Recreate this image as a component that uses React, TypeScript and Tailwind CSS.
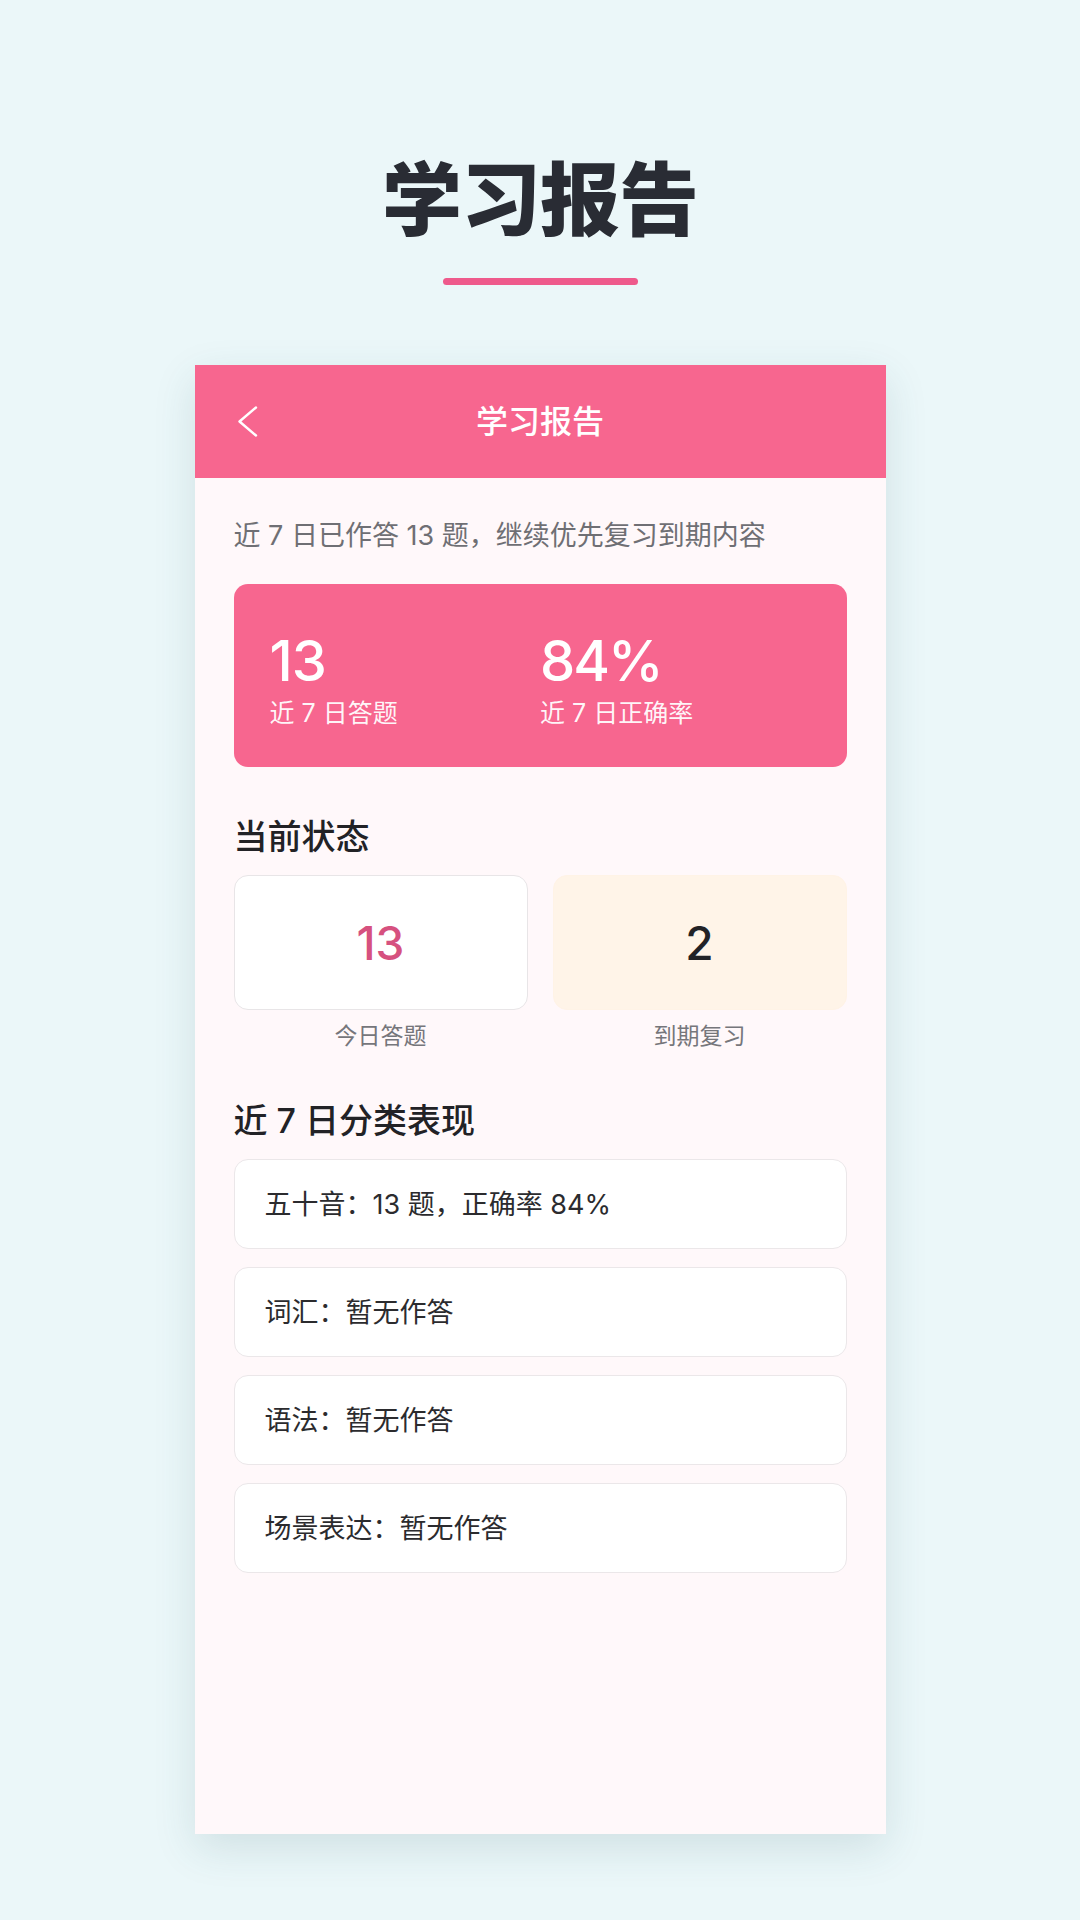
const categories = [
  "五十音：13 题，正确率 84%",
  "词汇：暂无作答",
  "语法：暂无作答",
  "场景表达：暂无作答",
]

function StatusBox({ value, label, tone }: { value: string; label: string; tone: "white" | "cream" }) {
  return (
    <div className="flex flex-col items-center">
      <div
        className={
          tone === "white"
            ? "w-full h-[135px] rounded-[14px] border-[1.5px] border-[#e8e5e7] bg-white flex items-center justify-center text-[46px] leading-none font-medium text-[#d6517f]"
            : "w-full h-[135px] rounded-[14px] border-[1.5px] border-[#fff3e6] bg-[#fff4e8] flex items-center justify-center text-[46px] leading-none font-medium text-[#222226]"
        }
      >
        {value}
      </div>
      <div className="mt-[10px] text-[23px] leading-[32px] text-[#76767b]">{label}</div>
    </div>
  )
}

export default function App() {
  return (
    <div className="min-h-[1920px] w-full bg-[#ebf7f9] flex flex-col items-center font-['Inter','Noto_Sans_CJK_SC',sans-serif]">
      <h1 className="pt-[152px] text-[80px] leading-[96px] font-black text-[#292c34] tracking-[-1px]">学习报告</h1>
      <div className="mt-[30px] h-[7px] w-[195px] rounded-full bg-[#ee5a8c]" />

      <div className="mt-[80px] w-[691px] h-[1469px] bg-[#fff8fa] shadow-[0_14px_40px_rgba(40,90,100,0.14)] flex flex-col">
        <div className="h-[113px] bg-[#f7668f] grid grid-cols-[1fr_auto_1fr] items-center px-[42px]">
          <svg width="21" height="31" viewBox="0 0 21 31" fill="none" className="text-white">
            <path d="M19 1.5 L2.5 15.5 L19 29.5" stroke="currentColor" strokeWidth="2.4" strokeLinecap="round" strokeLinejoin="round" />
          </svg>
          <div className="text-[32px] leading-none font-medium text-white">学习报告</div>
          <div />
        </div>

        <div className="px-[39px] pt-[40px] flex flex-col">
          <p className="text-[27px] leading-[36px] text-[#6f6f74]">近 7 日已作答 13 题，继续优先复习到期内容</p>

          <div className="mt-[30px] h-[183px] rounded-[14px] bg-[#f7668f] grid grid-cols-2 px-[36px] pt-[49px] text-white">
            <div className="flex flex-col">
              <div className="text-[56px] leading-[56px] font-medium tracking-[-1px]">13</div>
              <div className="mt-[8px] text-[25px] leading-[32px] text-white/95">近 7 日答题</div>
            </div>
            <div className="flex flex-col">
              <div className="text-[56px] leading-[56px] font-medium tracking-[-2px]">84%</div>
              <div className="mt-[8px] text-[25px] leading-[32px] text-white/95">近 7 日正确率</div>
            </div>
          </div>

          <h2 className="mt-[48px] text-[34px] leading-[44px] font-medium text-[#222226]">当前状态</h2>
          <div className="mt-[16px] grid grid-cols-2 gap-[25px]">
            <StatusBox value="13" label="今日答题" tone="white" />
            <StatusBox value="2" label="到期复习" tone="cream" />
          </div>

          <h2 className="mt-[47px] text-[34px] leading-[44px] font-medium text-[#222226]">近 7 日分类表现</h2>
          <div className="mt-[16px] flex flex-col gap-[18px]">
            {categories.map((c, i) => (
              <div
                key={i}
                className="h-[90px] rounded-[14px] border-[1.5px] border-[#ebe7e9] bg-white flex items-center pl-[30px] text-[27px] leading-none text-[#2b2b2e]"
              >
                {c}
              </div>
            ))}
          </div>
        </div>
      </div>
    </div>
  )
}
